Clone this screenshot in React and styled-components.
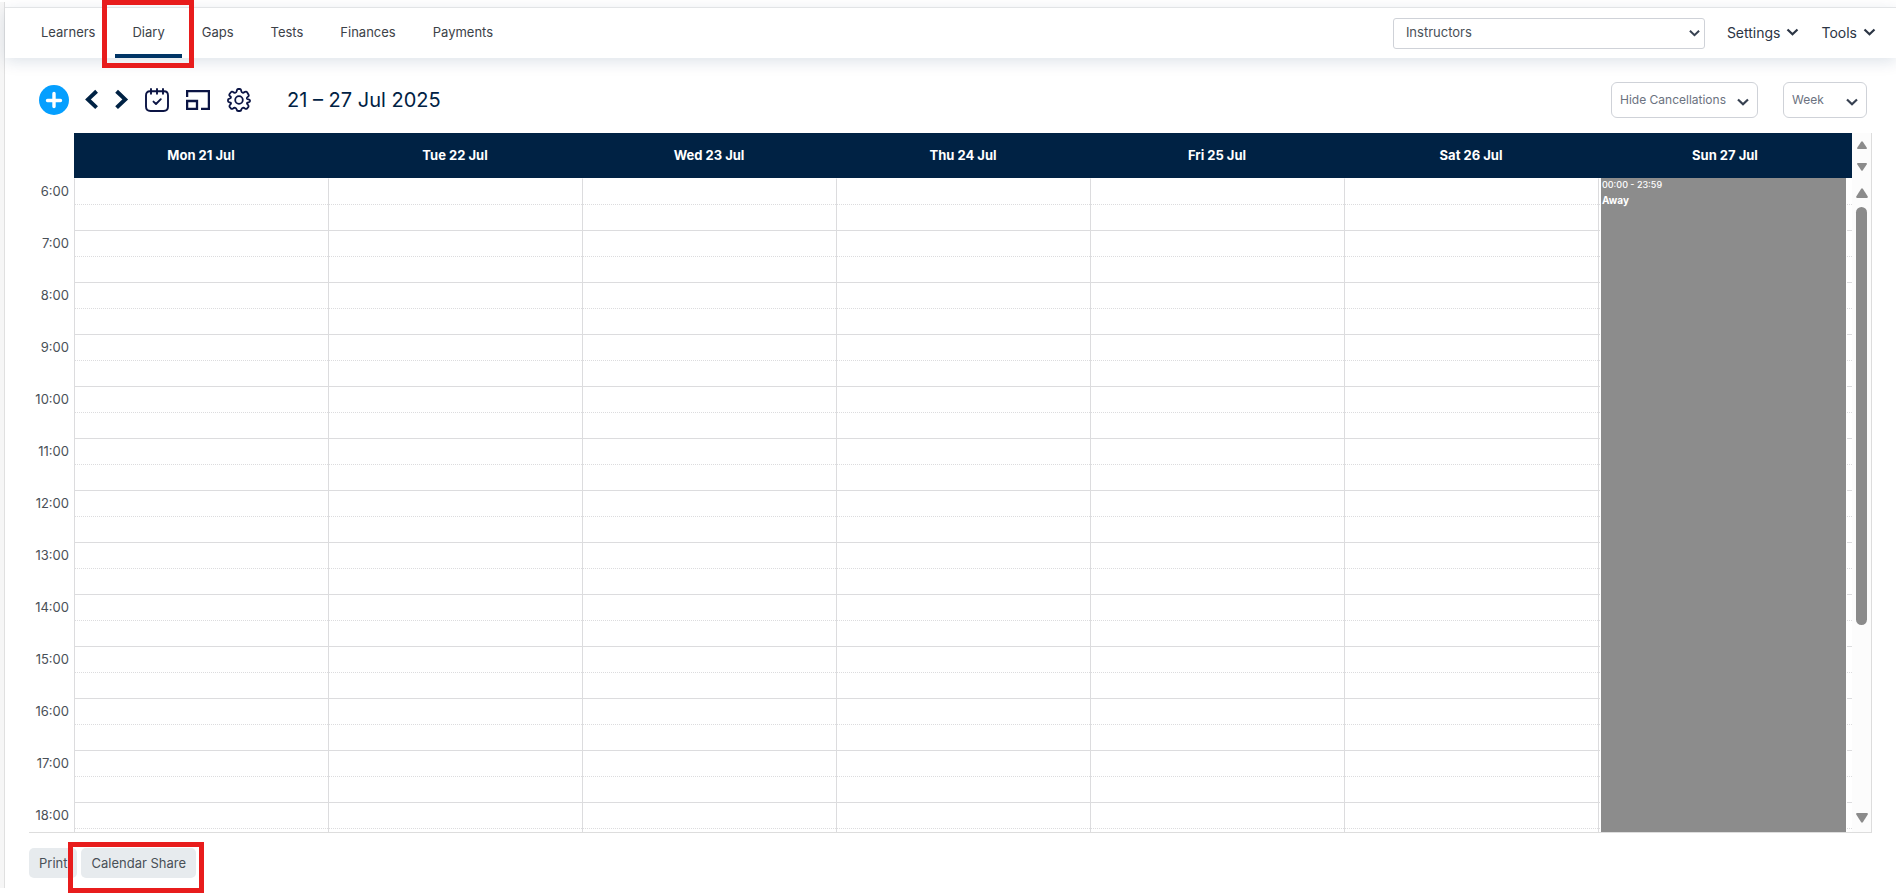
import React from "react";
import styled, { createGlobalStyle } from "styled-components";

const GlobalStyle = createGlobalStyle`
  *, *::before, *::after { box-sizing: border-box; }
  body {
    margin: 0;
    background: #ffffff;
    color: #374151;
    font-family: Inter, "Liberation Sans", sans-serif;
    font-size: 14px;
  }
  button, select { font-family: inherit; margin: 0; }
`;

const Page = styled.div`
  display: flex;
  height: 100vh;
  min-height: 480px;
  padding-top: 2px;
`;

const SideEdge = styled.aside`
  flex: none;
  width: 5px;
  margin-bottom: 6px;
  background: #f6f6f6;
  border-right: 1px solid #e0e0e0;
`;

const Main = styled.main`
  flex: 1;
  min-width: 0;
  display: flex;
  flex-direction: column;
  padding-top: 5px;
`;

const TopBar = styled.header`
  flex: none;
  display: flex;
  align-items: center;
  justify-content: space-between;
  height: 51px;
  padding: 0 20px 0 19px;
  border-top: 1px solid #e2e4e6;
  box-shadow: 0 4px 14px rgba(0, 45, 90, 0.13);
`;

const Nav = styled.nav`
  display: flex;
  align-self: stretch;
  gap: 3px;
`;

const NavSlot = styled.div`
  position: relative;
  display: flex;
`;

const NavLink = styled.a`
  display: flex;
  align-items: center;
  padding: 0 17px;
  border-top: 2px solid transparent;
  border-bottom: 4px solid ${(p) => (p.$active ? "#003566" : "transparent")};
  color: #3c4248;
  font-size: 13px;
  line-height: 20px;
  text-decoration: none;
`;

const Highlight = styled.span`
  position: absolute;
  inset: ${(p) => p.$inset};
  border: 5px solid #e81c1c;
  pointer-events: none;
`;

const TopActions = styled.div`
  display: flex;
  align-items: center;
  gap: 22px;
`;

const SelectBox = styled.label`
  position: relative;
  display: flex;
  width: ${(p) => p.$width}px;
  color: #374151;

  svg {
    position: absolute;
    right: ${(p) => p.$inset}px;
    top: ${(p) => p.$drop}px;
    pointer-events: none;
  }
`;

const Select = styled.select`
  appearance: none;
  width: 100%;
  height: ${(p) => (p.$soft ? 36 : 31)}px;
  padding: 0 ${(p) => (p.$soft ? 8 : 12)}px 2px;
  border: 1px solid #cfd2d8;
  border-radius: ${(p) => (p.$soft ? 6 : 3)}px;
  background: #ffffff;
  color: ${(p) => (p.$soft ? "#6b7280" : "#495057")};
  font-size: ${(p) => (p.$soft ? 12 : 13)}px;
`;

const MenuButton = styled.button`
  display: flex;
  align-items: center;
  gap: 6px;
  padding: 0;
  border: 0;
  background: none;
  color: #2b3544;
  font-size: 14px;
  line-height: 20px;

  svg { margin-bottom: 3px; }
`;

const Toolbar = styled.div`
  flex: none;
  display: flex;
  align-items: center;
  justify-content: space-between;
  height: 75px;
  padding: 9px 29px 0 34px;
`;

const ToolGroup = styled.div`
  display: flex;
  align-items: center;
  gap: ${(p) => p.$gap}px;
`;

const IconButton = styled.button`
  display: flex;
  padding: 0;
  border: 0;
  background: none;
  color: ${(p) => p.$color || "#0b1444"};
`;

const Title = styled.h1`
  margin: 0 0 0 20px;
  color: #002244;
  font-size: 20px;
  font-weight: 400;
  line-height: 28px;
`;

const Calendar = styled.section`
  flex: 1;
  min-height: 0;
  display: flex;
  margin: 0 24px;
  border-bottom: 1px solid #dddddd;
`;

const GridArea = styled.div`
  flex: 1;
  min-width: 0;
  overflow: hidden;
`;

const Grid = styled.table`
  width: 100%;
  table-layout: fixed;
  border-collapse: separate;
  border-spacing: 0;
`;

const TimeCol = styled.col`
  width: 45px;
`;

const DayHead = styled.th`
  height: 45px;
  padding: 0 0 2px;
  background: #002244;
  color: #ffffff;
  font-size: 13px;
  font-weight: 700;
`;

const TimeHead = styled.th`
  padding: 5px 5px 0 0;
  color: #495057;
  font-size: 13px;
  font-weight: 400;
  line-height: 16px;
  text-align: right;
  vertical-align: top;
`;

const Slot = styled.td`
  position: relative;
  height: 26px;
  padding: 0;
  border-left: 1px solid #dcdcde;
  border-top: 1px ${(p) => (p.$half ? "dotted" : "solid")}
    ${(p) => (p.$first ? "transparent" : "#dcdcde")};
`;

const AwayEvent = styled.article`
  position: absolute;
  z-index: 1;
  top: -1px;
  left: 1px;
  right: 5px;
  height: ${(p) => p.$slots * 26}px;
  border: solid #ffffff;
  border-width: 0 1px;
  background: #8c8c8c;
  color: #ffffff;
  padding: 0 1px;
`;

const EventTime = styled.div`
  font-size: 9px;
  font-weight: 500;
  line-height: 14px;
`;

const EventTitle = styled.div`
  font-size: 10px;
  font-weight: 700;
  line-height: 16px;
`;

const Rail = styled.div`
  flex: none;
  display: flex;
  flex-direction: column;
  width: 20px;
  background: #fcfcfc;
  border-right: 1px solid #dddddd;
`;

const RailPart = styled.div`
  display: flex;
  flex-direction: column;
  align-items: center;
  justify-content: space-between;
  flex: ${(p) => (p.$header ? "none" : "1")};
  height: ${(p) => (p.$header ? "45px" : "auto")};
  padding: ${(p) => (p.$header ? "8px 0 7px" : "10px 0 9px")};
`;

const Track = styled.div`
  flex: 1;
  width: 11px;
  margin: 9px 0;
`;

const Thumb = styled.div`
  height: 70%;
  border-radius: 6px;
  background: #8b8b8b;
`;

const Footer = styled.footer`
  flex: none;
  display: flex;
  gap: 4px;
  padding: 15px 24px 16px;
`;

const FooterSlot = styled.div`
  position: relative;
`;

const FooterButton = styled.button`
  display: block;
  height: 30px;
  padding: 0 10px;
  border: 0;
  border-radius: 5px;
  background: #e7ebee;
  color: #495057;
  font-size: 13px;
`;

const Chevron = ({ width = 12, stroke = 2 }) => (
  <svg width={width} height="8" viewBox="0 0 12 8" fill="none" stroke="currentColor" strokeWidth={stroke} aria-hidden="true">
    <path d="M1 1.5 L6 6.3 L11 1.5" />
  </svg>
);

const RailArrow = ({ size, down }) => (
  <svg width={size} height={size === 12 ? 10 : 8} viewBox="0 0 12 10" preserveAspectRatio="none" aria-hidden="true">
    <path
      fill="#8b8b8b"
      d={down
        ? "M1 0 H11 Q12.4 .4 11.6 1.8 L7 9 Q6 10.4 5 9 L.4 1.8 Q-.4 .4 1 0Z"
        : "M1 10 H11 Q12.4 9.6 11.6 8.2 L7 1 Q6 -.4 5 1 L.4 8.2 Q-.4 9.6 1 10Z"}
    />
  </svg>
);

const AddIcon = () => (
  <svg width="30" height="30" viewBox="0 0 30 30" aria-hidden="true">
    <circle cx="15" cy="15" r="15" fill="#059fff" />
    <path d="M15 8.5 V21.5 M8.5 15.5 H21.5" stroke="#fff" strokeWidth="3.4" strokeLinecap="round" />
  </svg>
);

const StepIcon = ({ next }) => (
  <svg width="14" height="22" viewBox="0 0 14 22" fill="none" stroke="currentColor" strokeWidth="4" aria-hidden="true">
    <path d={next ? "M1.6 2.2 L10.2 10.4 L1.6 18.6" : "M11.6 2.2 L3 10.4 L11.6 18.6"} />
  </svg>
);

const CalendarIcon = () => (
  <svg width="24" height="24" viewBox="0 0 24 24" fill="none" stroke="currentColor" strokeWidth="1.9" strokeLinecap="round" strokeLinejoin="round" aria-hidden="true">
    <path d="M5 3.3 Q1 3.3 1 7.5 V18.5 Q1 23 5.5 23 H18.5 Q23 23 23 18.5 V7.5 Q23 3.3 19 3.3 Z" />
    <path d="M6 1 V5.8 M12 1 V5.8 M18 1 V5.8 M8.5 13.6 L11 16 L15.8 11.2" />
  </svg>
);

const PanelIcon = () => (
  <svg width="24" height="20" viewBox="0 0 24 20" fill="none" stroke="currentColor" strokeWidth="2.3" aria-hidden="true">
    <path d="M1.1 7 V1.2 H22.9 V18.8 H15" />
    <path d="M1.1 11 H11 V18.8 H1.1 Z" />
  </svg>
);

const GearIcon = () => (
  <svg width="24" height="24" viewBox="0 0 24 24" fill="none" stroke="currentColor" strokeWidth="1.8" strokeLinejoin="round" aria-hidden="true">
    <path d="M9.7 3.2 Q10 1 11.2 1 H12.8 Q14 1 14.3 3.2 Q14.4 4.5 16 4.9 Q17 4.4 18 3.9 Q19.4 3.3 20.1 4.3 L21.6 6.7 Q22.2 7.8 21.2 8.6 Q19.6 9.7 19.8 10.5 Q20 11.1 21.5 11.4 Q23 11.7 23 12.6 V13.2 Q22.9 14.1 21.4 14.3 Q19.8 14.6 20 15.6 L21.1 17 Q22 18 21.4 18.9 L20.1 20.5 Q19.2 21.3 18 20.5 Q16.7 19.4 15.7 19.9 Q14.5 20.3 14.4 21.5 Q14.1 23 12.8 23 H11.2 Q9.9 23 9.6 21.5 Q9.5 20.3 8.3 19.9 Q7.3 19.4 6 20.5 Q4.8 21.3 3.9 20.5 L2.6 18.9 Q2 18 2.9 17 L4 15.6 Q4.2 14.6 2.6 14.3 Q1.1 14.1 1 13.2 V11.8 Q1 10.9 2.5 10.7 Q4.2 10.3 4 9.2 Q3.8 8.8 2.8 8 Q1.8 7.2 2.4 6.3 L3.9 4.3 Q4.6 3.3 6 3.9 Q7 4.6 8 4.9 Q9.6 4.5 9.7 3.2 Z" />
    <circle cx="12" cy="12" r="3.8" />
  </svg>
);

const NAV = ["Learners", "Diary", "Gaps", "Tests", "Finances", "Payments"];
const DAYS = ["Mon 21 Jul", "Tue 22 Jul", "Wed 23 Jul", "Thu 24 Jul", "Fri 25 Jul", "Sat 26 Jul", "Sun 27 Jul"];
const HOURS = Array.from({ length: 13 }, (_, i) => i + 6);

function Slots({ hour, half }) {
  const first = hour === HOURS[0] && !half;
  return DAYS.map((day, i) => (
    <Slot key={day} $half={half} $first={first}>
      {first && i === DAYS.length - 1 && (
        <AwayEvent $slots={HOURS.length * 2}>
          <EventTime>00:00 - 23:59</EventTime>
          <EventTitle>Away</EventTitle>
        </AwayEvent>
      )}
    </Slot>
  ));
}

function WeekGrid() {
  return (
    <Calendar>
      <GridArea>
        <Grid>
          <colgroup>
            <TimeCol />
            {DAYS.map((day) => <col key={day} />)}
          </colgroup>
          <thead>
            <tr>
              <td />
              {DAYS.map((day) => <DayHead key={day} scope="col">{day}</DayHead>)}
            </tr>
          </thead>
          <tbody>
            {HOURS.map((hour) => (
              <React.Fragment key={hour}>
                <tr>
                  <TimeHead rowSpan={2} scope="rowgroup">{hour}:00</TimeHead>
                  <Slots hour={hour} />
                </tr>
                <tr>
                  <Slots hour={hour} half />
                </tr>
              </React.Fragment>
            ))}
          </tbody>
        </Grid>
      </GridArea>
      <Rail>
        <RailPart $header>
          <RailArrow size={10} />
          <RailArrow size={10} down />
        </RailPart>
        <RailPart>
          <RailArrow size={12} />
          <Track><Thumb /></Track>
          <RailArrow size={12} down />
        </RailPart>
      </Rail>
    </Calendar>
  );
}

export default function App() {
  return (
    <>
      <GlobalStyle />
      <Page>
        <SideEdge />
        <Main>
          <TopBar>
            <Nav>
              {NAV.map((name) => (
                <NavSlot key={name}>
                  <NavLink href="#" $active={name === "Diary"}>{name}</NavLink>
                  {name === "Diary" && <Highlight $inset="-8px -12px -10px -13px" />}
                </NavSlot>
              ))}
            </Nav>
            <TopActions>
              <SelectBox $width={312} $inset={5} $drop={11}>
                <Select aria-label="Instructors">
                  <option>Instructors</option>
                </Select>
                <Chevron width={11} stroke={2.2} />
              </SelectBox>
              <MenuButton>Settings <Chevron width={13} stroke={2.2} /></MenuButton>
              <MenuButton>Tools <Chevron width={13} stroke={2.2} /></MenuButton>
            </TopActions>
          </TopBar>

          <Toolbar>
            <ToolGroup $gap={16}>
              <IconButton aria-label="Add"><AddIcon /></IconButton>
              <IconButton aria-label="Previous week" $color="#002244"><StepIcon /></IconButton>
              <IconButton aria-label="Next week" $color="#002244"><StepIcon next /></IconButton>
              <ToolGroup $gap={17}>
                <IconButton aria-label="Today"><CalendarIcon /></IconButton>
                <IconButton aria-label="Resize"><PanelIcon /></IconButton>
                <IconButton aria-label="Diary settings"><GearIcon /></IconButton>
              </ToolGroup>
              <Title>21 – 27 Jul 2025</Title>
            </ToolGroup>
            <ToolGroup $gap={25}>
              <SelectBox $width={147} $inset={9} $drop={16}>
                <Select $soft aria-label="Cancellations">
                  <option>Hide Cancellations</option>
                </Select>
                <Chevron stroke={2.2} />
              </SelectBox>
              <SelectBox $width={84} $inset={9} $drop={16}>
                <Select $soft aria-label="View">
                  <option>Week</option>
                </Select>
                <Chevron stroke={2.2} />
              </SelectBox>
            </ToolGroup>
          </Toolbar>

          <WeekGrid />

          <Footer>
            <FooterSlot><FooterButton>Print</FooterButton></FooterSlot>
            <FooterSlot>
              <FooterButton>Calendar Share</FooterButton>
              <Highlight $inset="-6px -8px -15px -13px" />
            </FooterSlot>
          </Footer>
        </Main>
      </Page>
    </>
  );
}
